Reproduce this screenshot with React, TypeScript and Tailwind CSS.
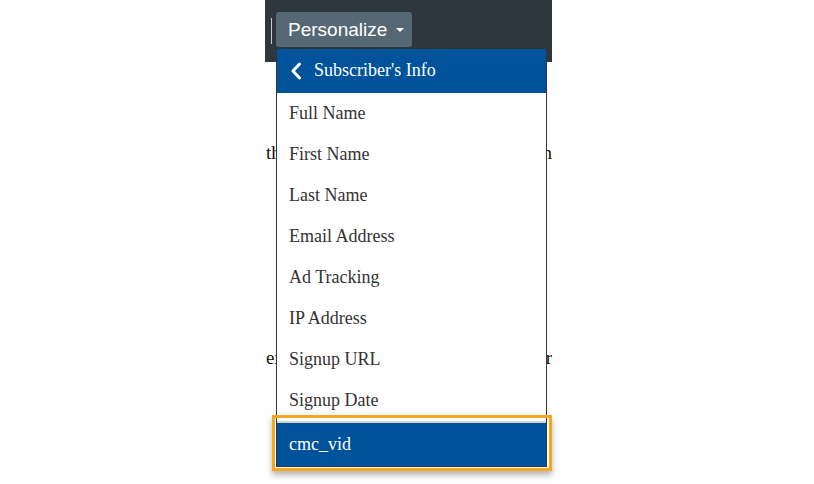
import React from 'react';

const items = ['Full Name', 'First Name', 'Last Name', 'Email Address', 'Ad Tracking', 'IP Address', 'Signup URL', 'Signup Date'];

function ChevronLeft() {
    return (
        <svg width="12" height="18" viewBox="0 0 12 18" fill="none">
            <path d="M9.5 2L3 9L9.5 16" stroke="white" strokeWidth="3" strokeLinecap="round" strokeLinejoin="round" />
        </svg>
    );
}

// Page text peeking out at both sides of the open menu
function PeekLine({ left, right, className = '' }: { left: string; right: string; className?: string }) {
    return (
        <div className={`flex justify-between leading-[24px] ${className}`}>
            <span className="w-[10px] overflow-hidden whitespace-nowrap">{left}</span>
            <span className="w-[6px] overflow-hidden whitespace-nowrap flex justify-end">
                <span className="shrink-0">{right}</span>
            </span>
        </div>
    );
}

export default function App() {
    return (
        <div className="relative w-[814px] h-[484px] bg-white overflow-hidden" style={{ fontFamily: '"Liberation Serif", serif' }}>
            {/* Toolbar */}
            <div className="ml-[265px] w-[287px] h-[62px] bg-[#2e373e] flex items-start pt-[12px]">
                <div className="w-px h-[26px] bg-[#c8cdd0] mt-[6px] ml-[6px]" />
                <div
                    className="ml-[4px] h-[35px] w-[136px] rounded-[3px] bg-[#566873] flex items-center pl-[12px] gap-[9px] text-white text-[19px]"
                    style={{ fontFamily: '"Liberation Sans", Arial, sans-serif' }}
                >
                    <span className="mt-[1px]">Personalize</span>
                    <span className="w-0 h-0 border-l-[4px] border-r-[4px] border-t-[4px] border-l-transparent border-r-transparent border-t-white mt-[1px]" />
                </div>
            </div>

            {/* Page text behind the menu */}
            <div className="ml-[266px] w-[286px] text-[19px] text-[#111]">
                <PeekLine left="the" right="on" className="mt-[79px]" />
                <PeekLine left="email" right="or" className="mt-[181px]" />
            </div>

            {/* Dropdown menu */}
            <div className="absolute left-[276px] top-[48px] w-[271px] border border-[#2e373e] bg-white flex flex-col">
                <div className="h-[44px] bg-[#00539b] flex items-center pl-[13px] gap-[12px] text-white text-[18px]">
                    <ChevronLeft />
                    <span className="-mt-[1px]">Subscriber's Info</span>
                </div>
                {items.map((item) => (
                    <div key={item} className="h-[41px] flex items-center pl-[12px] text-[18px] text-[#333]">
                        {item}
                    </div>
                ))}
                <div className="h-[45px] pt-[2px] bg-[#d4d4d4]">
                    <div className="h-[43px] bg-[#00539b] flex items-center pl-[12px] text-[18px] text-white">
                        cmc_vid
                    </div>
                </div>
            </div>

            {/* Highlight annotation */}
            <div className="absolute left-[272px] top-[415px] w-[280px] h-[56px] border-[3px] border-[#f5a81c] shadow-[0_4px_6px_rgba(0,0,0,0.3)]" />
        </div>
    );
}
